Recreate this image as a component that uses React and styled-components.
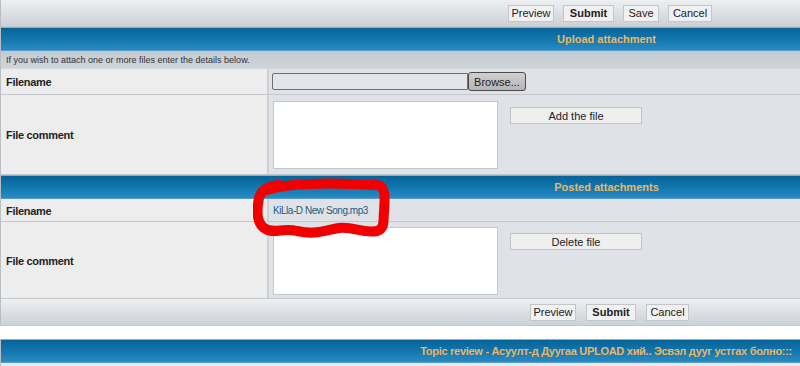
import React from 'react';
import styled, { createGlobalStyle } from 'styled-components';

const GlobalStyle = createGlobalStyle`
  body {
    margin: 0;
    background: #ffffff;
    font-family: "Liberation Sans", Arial, sans-serif;
  }
`;

const font = `"Liberation Sans", Arial, sans-serif`;

const App = () => (
  <Page>
    <GlobalStyle />
    <Panel>
      <ButtonBar>
        <ButtonGroup start={508} gap={9}>
          <BarButton w={46}>Preview</BarButton>
          <BarButton w={51} bold>Submit</BarButton>
          <BarButton w={36}>Save</BarButton>
          <BarButton w={44}>Cancel</BarButton>
        </ButtonGroup>
      </ButtonBar>

      <Header>Upload attachment</Header>
      <Info>If you wish to attach one or more files enter the details below.</Info>

      <Row height={25}>
        <Label>Filename</Label>
        <Cell>
          <FileInput type="text" readOnly value="" />
          <BrowseButton>Browse...</BrowseButton>
        </Cell>
      </Row>
      <Row height={79}>
        <Label>File comment</Label>
        <Cell top={6}>
          <Comment readOnly />
          <WideButton>Add the file</WideButton>
        </Cell>
      </Row>

      <Header>Posted attachments</Header>
      <Row height={22}>
        <Label>Filename</Label>
        <Cell>
          <FileLink>KiLla-D New Song.mp3</FileLink>
        </Cell>
      </Row>
      <Row height={76}>
        <Label>File comment</Label>
        <Cell top={5}>
          <Comment readOnly />
          <WideButton>Delete file</WideButton>
        </Cell>
      </Row>

      <ButtonBar>
        <ButtonGroup start={530} gap={10}>
          <BarButton w={46}>Preview</BarButton>
          <BarButton w={50} bold>Submit</BarButton>
          <BarButton w={43}>Cancel</BarButton>
        </ButtonGroup>
      </ButtonBar>
    </Panel>

    <Spacer />

    <Panel>
      <Header right>Topic review - Асуулт-д Дуугаа UPLOAD хий.. Эсвэл дууг устгах болно:::</Header>
      <Footer />
    </Panel>

    <Scribble width="140" height="66" viewBox="0 0 140 66">
      <path
        d="M14 12 C40 3, 90 5, 124 7 C133 8, 132 20, 131 34 C130 44, 132 50, 124 53
           C110 56, 100 48, 86 50 C70 53, 62 57, 44 53 C30 49, 20 57, 11 50
           C3 44, 4 30, 6 20 C8 12, 16 8, 26 7"
        fill="none"
        stroke="#f00000"
        strokeWidth="10"
        strokeLinecap="round"
        strokeLinejoin="round"
      />
    </Scribble>
  </Page>
);

const Page = styled.div`
  position: relative;
  width: 800px;
  overflow: hidden;
`;

const Panel = styled.div`
  border-left: 1px solid #b9bec4;
`;

const ButtonBar = styled.div`
  height: 26px;
  display: flex;
  align-items: center;
  background: linear-gradient(#eef0f2, #d9dde1 60%, #cdd2d7);
  border-bottom: 1px solid #c2c7cd;
`;

const ButtonGroup = styled.div`
  display: flex;
  gap: ${({ gap }) => gap}px;
  padding-left: ${({ start }) => start - 1}px;
`;

const BarButton = styled.button`
  width: ${({ w }) => w}px;
  height: 17px;
  padding: 0;
  background: #f1f1f1;
  border: 1px solid #c3c6c9;
  border-radius: 0;
  font-family: ${font};
  font-size: 11px;
  font-weight: ${({ bold }) => (bold ? 'bold' : 'normal')};
  color: #222;
  line-height: 15px;
`;

const Header = styled.div`
  height: 22px;
  display: flex;
  align-items: center;
  justify-content: ${({ right }) => (right ? 'flex-end' : 'center')};
  padding-left: ${({ right }) => (right ? '0' : '412px')};
  padding-right: ${({ right }) => (right ? '8px' : '0')};
  border-top: 1px solid #7fb3d6;
  border-bottom: 1px solid #5c9cc8;
  background: linear-gradient(#066398, #1478b0 55%, #2a8bc3);
  color: #e9b765;
  font-family: ${font};
  font-size: 11px;
  font-weight: bold;
  letter-spacing: ${({ right }) => (right ? '-0.28px' : '0')};
  white-space: nowrap;
`;

const Info = styled.div`
  height: 17px;
  display: flex;
  align-items: center;
  padding-left: 5px;
  background: linear-gradient(#c3cad1, #cfd5db);
  color: #333;
  font-family: ${font};
  font-size: 9px;
  border-bottom: 1px solid #d6dade;
`;

const Row = styled.div`
  display: grid;
  grid-template-columns: 268px 1fr;
  height: ${({ height }) => height}px;
  border-bottom: 1px solid #c4c8cd;
`;

const Label = styled.div`
  display: flex;
  align-items: center;
  padding: 1px 0 0 5px;
  background: #ededed;
  border-right: 2px solid #cdd1d5;
  color: #222;
  font-family: ${font};
  font-size: 11px;
  font-weight: bold;
  letter-spacing: -0.3px;
`;

const Cell = styled.div`
  display: flex;
  align-items: ${({ top }) => (top ? 'flex-start' : 'center')};
  padding: ${({ top }) => (top ? `${top}px 0 0 4px` : '0 0 0 3px')};
  background: #dfe2e6;
`;

const FileInput = styled.input`
  width: 196px;
  height: 17px;
  box-sizing: border-box;
  margin: 0;
  background: #e3e5ec;
  border: 1px solid #6d6f73;
  border-radius: 2px 0 0 2px;
`;

const BrowseButton = styled.button`
  width: 58px;
  height: 19px;
  margin: 0;
  padding: 0;
  background: linear-gradient(#d0d0d0, #b4b4b4);
  border: 1px solid #4a4a4a;
  border-radius: 3px;
  color: #1e1e1e;
  font-family: ${font};
  font-size: 11px;
`;

const Comment = styled.textarea`
  width: 225px;
  height: 68px;
  box-sizing: border-box;
  margin: 0;
  background: #ffffff;
  border: 1px solid #c4c7cb;
  resize: none;
`;

const WideButton = styled.button`
  width: 132px;
  height: 17px;
  margin: 6px 0 0 12px;
  padding: 0;
  background: #efefef;
  border: 1px solid #c2c5c8;
  color: #222;
  font-family: ${font};
  font-size: 11px;
`;

const FileLink = styled.span`
  padding: 1px 0 0 1px;
  color: #245a83;
  font-family: ${font};
  font-size: 10px;
  letter-spacing: -0.45px;
`;

const Spacer = styled.div`
  height: 13px;
  background: #ffffff;
`;

const Footer = styled.div`
  height: 4px;
  background: #e8ebee;
`;

const Scribble = styled.svg`
  position: absolute;
  left: 253px;
  top: 178px;
  pointer-events: none;
`;

export default App;
